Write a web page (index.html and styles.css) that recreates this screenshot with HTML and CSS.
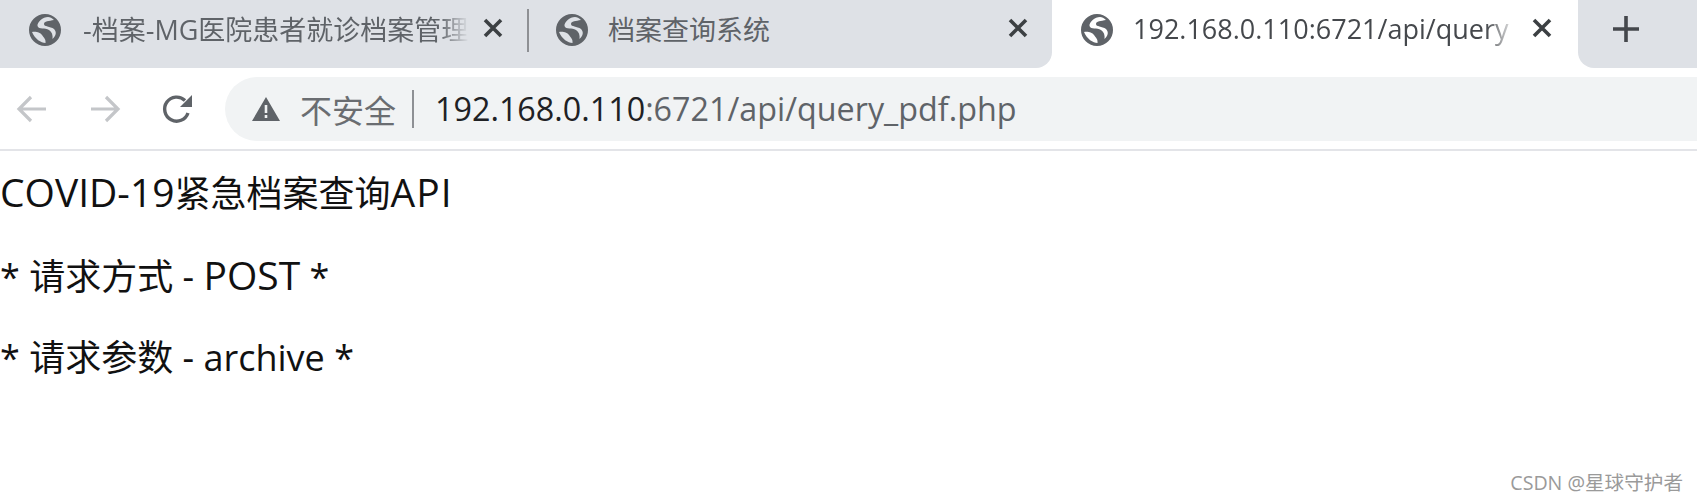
FILE: index.html
```html
<!DOCTYPE html>
<html lang="zh">

<head>
    <meta charset="UTF-8">
    <title>COVID-19紧急档案查询API</title>
    <link rel="stylesheet" href="styles.css">
</head>

<body>
    <svg class="defs" width="0" height="0">
        <symbol id="globe" viewBox="0 0 32 32">
            <path fill-rule="evenodd" d="M16 0a16 16 0 1 0 0 32a16 16 0 0 0 0-32z M19 3C14 3 8 8 8.500 12C10 16 16 13 20 16C23 18 24 21 23.500 25C27 22 28 18 25 15C21 12 15 13 15 10C15 7 20 7 25 6C23 4 21 3 19 3z M3 18C7 17 12 19 13 21C15 24 17 25 16.500 29C12 29 6 25 3 18z"/>
        </symbol>
        <symbol id="close" viewBox="0 0 24 24">
            <path d="M4 4L20 20M20 4L4 20" stroke-width="3.6" fill="none"/>
        </symbol>
    </svg>

    <div class="tabstrip">
        <div class="tab tab-first">
            <svg class="favicon"><use href="#globe"></use></svg>
            <span class="tab-title">-档案-MG医院患者就诊档案管理</span>
            <svg class="tab-close"><use href="#close"></use></svg>
        </div>
        <div class="tab-sep"></div>
        <div class="tab tab-second">
            <svg class="favicon"><use href="#globe"></use></svg>
            <span class="tab-title">档案查询系统</span>
            <svg class="tab-close"><use href="#close"></use></svg>
        </div>
        <div class="tab tab-active">
            <svg class="favicon"><use href="#globe"></use></svg>
            <span class="tab-title">192.168.0.110:6721/api/query</span>
            <svg class="tab-close"><use href="#close"></use></svg>
        </div>
        <div class="tab-new">
            <svg width="28" height="28" viewBox="0 0 28 28"><path d="M14 1v26M1 14h26" stroke="#44474c" stroke-width="3.6" fill="none"/></svg>
        </div>
    </div>

    <div class="toolbar">
        <svg class="nav-icon" viewBox="0 0 32 32"><path d="M30 16H4M15 4L3 16l12 12" stroke="#c4c6c9" stroke-width="3.2" fill="none"/></svg>
        <svg class="nav-icon" viewBox="0 0 32 32"><path d="M2 16h26M17 4l12 12l-12 12" stroke="#c4c6c9" stroke-width="3.2" fill="none"/></svg>
        <svg class="nav-icon" viewBox="0 0 32 32"><path d="M27 20a12 12 0 1 1-3-12.500" stroke="#5f6368" stroke-width="3.4" fill="none"/><path d="M31 2v12H19z" fill="#5f6368"/></svg>
        <div class="omnibox">
            <svg class="warn" viewBox="0 0 28 26"><path fill-rule="evenodd" d="M14 1L28 25H0z M12.700 9v8h2.600V9z M12.700 19v3h2.600v-3z" fill="#5f6368"/></svg>
            <span class="insecure">不安全</span>
            <span class="divider"></span>
            <span class="url"><span class="host">192.168.0.110</span>:6721/api/query_pdf.php</span>
        </div>
    </div>

    <div class="content">
        <p><span class="caps">COVID-19</span>紧急档案查询<span class="caps caps-api">API</span></p>
        <p>* 请求方式 - <span class="caps">POST</span> *</p>
        <p>* 请求参数 - archive *</p>
    </div>

    <div class="watermark">CSDN @星球守护者</div>
</body>

</html>
```

FILE: styles.css
```css
body {
    margin: 0;
    height: 502px;
    overflow: hidden;
    background: #fff;
    font-family: "Open Sans", "Noto Sans CJK SC", sans-serif;
}

.defs {
    position: absolute;
}

.tabstrip {
    display: flex;
    height: 68px;
}

.tab {
    display: flex;
    align-items: center;
    height: 68px;
    padding-bottom: 8px;
    box-sizing: border-box;
    background: #dee1e6;
    color: #5f6368;
    font-size: 27px;
}

.tab-first {
    width: 527px;
    padding-left: 29px;
}

.tab-first .tab-title {
    margin-left: 22px;
}

.tab-first .tab-close {
    margin-left: 12px;
}

.tab-sep {
    width: 2px;
    height: 68px;
    background: linear-gradient(#dee1e6 9px, #8e9094 9px, #8e9094 52px, #dee1e6 52px);
}

.tab-second {
    width: 523px;
    padding-left: 27px;
    border-radius: 0 0 16px 0;
}

.tab-active {
    width: 526px;
    padding-left: 29px;
    background: #fff;
    color: #45484c;
}

.tab-active .tab-close {
    margin-right: 24px;
    margin-left: 14px;
}

.favicon {
    width: 32px;
    height: 32px;
    flex: none;
    fill: #5f6368;
}

.tab-title {
    flex: 1;
    margin-left: 20px;
    margin-bottom: 3px;
    overflow: hidden;
    white-space: nowrap;
    -webkit-mask-image: linear-gradient(to left, transparent 0, #000 30px);
    mask-image: linear-gradient(to left, transparent 0, #000 30px);
}

.tab-second .tab-title {
    -webkit-mask-image: none;
    mask-image: none;
}

.tab-close {
    width: 24px;
    height: 24px;
    flex: none;
    margin: 0 22px 4px 16px;
    stroke: #3c4043;
}

.tab-new {
    display: flex;
    flex: 1;
    align-items: center;
    padding-left: 34px;
    padding-bottom: 10px;
    background: #dee1e6;
    border-radius: 0 0 0 16px;
}

.toolbar {
    display: flex;
    align-items: center;
    height: 83px;
    box-sizing: border-box;
    padding: 9px 0 9px 16px;
    border-bottom: 2px solid #e3e4e8;
}

.nav-icon {
    width: 32px;
    height: 32px;
    flex: none;
    margin-right: 41px;
}

.nav-icon:nth-of-type(2) {
    margin-right: 40px;
}

.nav-icon:nth-of-type(3) {
    margin-right: 32px;
}

.omnibox {
    display: flex;
    align-items: center;
    flex: 1;
    height: 64px;
    padding-left: 27px;
    background: #f1f3f4;
    border-radius: 32px 0 0 32px;
}

.warn {
    width: 28px;
    height: 26px;
    flex: none;
}

.insecure {
    margin-left: 20px;
    color: #6a6d71;
    font-size: 32px;
}

.divider {
    width: 2px;
    height: 38px;
    margin: 0 21px 0 16px;
    background: #8e9094;
}

.url {
    margin-bottom: 2px;
    color: #5f6368;
    font-size: 32.3px;
}

.host {
    color: #202124;
}

.content {
    padding-top: 17px;
    color: #111;
    font-size: 36px;
    line-height: 48px;
}

.content p {
    margin: 0 0 33px;
}

.caps {
    font-size: 39px;
}

.caps-api {
    letter-spacing: 1px;
}

.watermark {
    position: absolute;
    right: 14px;
    bottom: 6px;
    color: #9a9a9a;
    font-size: 19.6px;
}
```
